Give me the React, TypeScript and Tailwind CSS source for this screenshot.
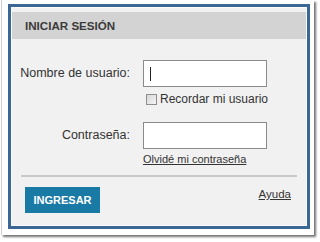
import React from 'react';

export default function App() {
  return (
    <div className="w-[320px] h-[242px] bg-white font-['Liberation_Sans',Arial,sans-serif] text-[#333]">
      {/* photo frame */}
      <div className="ml-[1px] w-[313px] h-[235px] bg-white border-l border-[#cfcfcf] shadow-[2px_2px_2px_rgba(0,0,0,0.55)] pl-[6px] pt-[4px]">
        {/* login panel */}
        <div className="w-[302px] h-[225px] border-[3px] border-[#3a6793]">
          <div className="h-full border border-[#fafafa] bg-[#f1f1f1] flex flex-col">
            <div className="mt-[4px] h-[27px] bg-[#d3d3d3] pl-[13px] flex items-center">
              <span className="text-[11.6px] font-bold text-[#3a3a3a]">INICIAR SESIÓN</span>
            </div>

            {/* username */}
            <div className="mt-[21px] flex items-center">
              <label className="w-[131px] pr-[13px] text-right text-[12.5px]">Nombre de usuario:</label>
              <div className="w-[124px] h-[27px] bg-white border border-[#8a8a8a] flex items-center pl-[6px]">
                <span className="w-[1px] h-[14px] bg-[#222]"></span>
              </div>
            </div>
            <div className="mt-[6px] ml-[134px] flex items-center gap-[3px]">
              <span className="w-[11px] h-[11px] border border-[#8e8e8e] bg-gradient-to-br from-[#d8d8d8] to-[#f4f4f4]"></span>
              <span className="text-[12px] leading-[13px]">Recordar mi usuario</span>
            </div>

            {/* password */}
            <div className="mt-[16px] flex items-center">
              <label className="w-[131px] pr-[13px] text-right text-[12.5px]">Contraseña:</label>
              <div className="w-[124px] h-[27px] bg-white border border-[#8a8a8a]"></div>
            </div>
            <div className="mt-[4px] ml-[131px] text-[11px] leading-[13px]">
              <a href="#" className="underline">Olvidé mi contraseña</a>
            </div>

            <div className="mt-[9px] mx-[9px] h-[2px] bg-[#c9c9c9]"></div>

            <div className="mt-[10px] pl-[13px] pr-[15px] flex items-start justify-between">
              <button className="w-[75px] h-[26px] bg-[#1a7aa6] text-white text-[11px] font-bold">INGRESAR</button>
              <a href="#" className="mt-[1px] text-[11.5px] leading-[13px] underline">Ayuda</a>
            </div>
          </div>
        </div>
      </div>
    </div>
  );
}
